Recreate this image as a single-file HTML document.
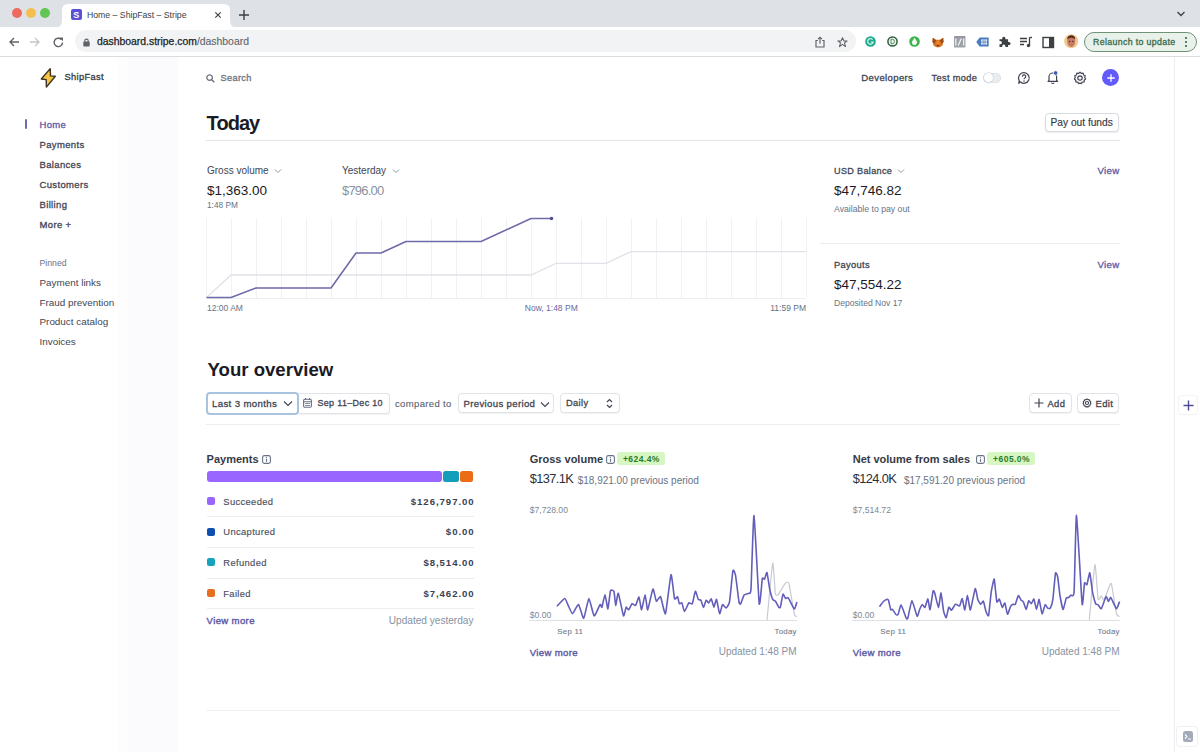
<!DOCTYPE html>
<html><head><meta charset="utf-8"><title>Stripe</title>
<style>
*{box-sizing:border-box;margin:0;padding:0}
html,body{width:1200px;height:752px;overflow:hidden;background:#fff;font-family:"Liberation Sans",sans-serif;color:#353a44}
.a{position:absolute;white-space:nowrap;line-height:1}
.b{position:absolute}
svg.b{overflow:visible}
</style></head><body>
<div class="b" style="left:0px;top:0px;width:1200px;height:27px;background:#dee1e6"></div>
<div class="b" style="left:11.7px;top:7.5px;width:10px;height:10px;background:#ed6a5e;border-radius:50%"></div>
<div class="b" style="left:25.8px;top:7.5px;width:10px;height:10px;background:#f5bf4f;border-radius:50%"></div>
<div class="b" style="left:39.6px;top:7.5px;width:10px;height:10px;background:#62c655;border-radius:50%"></div>
<svg class="b" style="left:54px;top:3px" width="184" height="25" viewBox="0 0 184 25"><path d="M0 25 Q8 25 8 17 L8 7 Q8 1 14 1 L170 1 Q176 1 176 7 L176 17 Q176 25 184 25 Z" fill="#fff"/></svg>
<div class="b" style="left:70.5px;top:9.2px;width:11px;height:11px;background:#5b50d6;border-radius:2px"></div>
<div class="a" style="left:73.2px;top:11.0px;font-size:9px;font-weight:700;color:#fff;">S</div>
<div class="a" style="left:87.0px;top:10.8px;font-size:8.7px;font-weight:400;color:#3c4043;">Home – ShipFast – Stripe</div>
<svg class="b" style="left:213px;top:10px" width="10" height="10"><path d="M2.3 2.3L7.7 7.7M7.7 2.3L2.3 7.7" stroke="#3c4043" stroke-width="1.15"/></svg>
<svg class="b" style="left:238px;top:9px" width="12" height="12"><path d="M6 1V11M1 6H11" stroke="#3c4043" stroke-width="1.4"/></svg>
<svg class="b" style="left:1176px;top:10px" width="10" height="8"><path d="M1.5 2L5 5.5L8.5 2" stroke="#3c4043" stroke-width="1.3" fill="none"/></svg>
<div class="b" style="left:0px;top:27px;width:1200px;height:30px;background:#fff"></div>
<div class="b" style="left:0px;top:56px;width:1200px;height:1px;background:#dadce0"></div>
<svg class="b" style="left:8px;top:36px" width="12" height="12"><path d="M11 6H2M6 2L2 6L6 10" stroke="#5f6368" stroke-width="1.4" fill="none"/></svg>
<svg class="b" style="left:29px;top:36px" width="12" height="12"><path d="M1 6H10M6 2L10 6L6 10" stroke="#c4c7cb" stroke-width="1.4" fill="none"/></svg>
<svg class="b" style="left:52px;top:35.5px" width="13" height="13"><path d="M10.5 6.5A4.2 4.2 0 1 1 9.2 3.4" stroke="#5f6368" stroke-width="1.4" fill="none"/><path d="M7.2 1.5H11V5.3Z" fill="#5f6368"/></svg>
<div class="b" style="left:75px;top:30px;width:781px;height:21.5px;background:#f1f3f4;border-radius:11px"></div>
<svg class="b" style="left:82.5px;top:37.5px" width="7" height="9"><rect x="0.3" y="3.6" width="6.4" height="5" rx=".8" fill="#5f6368"/><path d="M1.8 4V2.8A1.7 1.7 0 0 1 5.2 2.8V4" stroke="#5f6368" stroke-width="1.1" fill="none"/></svg>
<div class="a" style="left:97.0px;top:36.5px;font-size:10.4px;font-weight:400;color:#202124;-webkit-text-stroke:0.25px #202124">dashboard.stripe.com<span style="color:#5f6368;-webkit-text-stroke:0.1px #5f6368">/dashboard</span></div>
<svg class="b" style="left:815px;top:36px" width="10" height="12"><path d="M2.8 4.5H1V11H9V4.5H7.2" stroke="#5f6368" stroke-width="1.15" fill="none"/><path d="M5 7.8V1.3M3 3.2L5 1.2L7 3.2" stroke="#5f6368" stroke-width="1.15" fill="none"/></svg>
<svg class="b" style="left:837px;top:36.5px" width="11" height="11"><path d="M5.5 0.8L6.9 3.9H10.2L7.5 5.9L8.5 9.6L5.5 7.4L2.5 9.6L3.5 5.9L0.8 3.9H4.1Z" stroke="#5f6368" stroke-width="1.05" fill="none" stroke-linejoin="round"/></svg>
<svg class="b" style="left:864.7px;top:35.8px" width="11" height="11"><circle cx="5.5" cy="5.5" r="5.3" fill="#1fa88e"/><path d="M7.6 3.6A2.8 2.8 0 1 0 8.2 6.2H5.8" stroke="#c8f5e6" stroke-width="1.3" fill="none"/></svg>
<svg class="b" style="left:887.2px;top:35.8px" width="11" height="11"><circle cx="5.5" cy="5.5" r="4.6" fill="#eef6ef" stroke="#2f5d3a" stroke-width="1.5"/><path d="M4 3.3V7.7H5.3A2.2 2.2 0 0 0 5.3 3.3Z" fill="none" stroke="#4e7a58" stroke-width=".9"/></svg>
<svg class="b" style="left:909.2px;top:35.8px" width="11" height="11"><circle cx="5.5" cy="5.5" r="5.3" fill="#3bb54a"/><path d="M5.5 1.8L7.8 5.2A2.6 2.6 0 1 1 3.2 5.2Z" fill="#f3fbf2"/></svg>
<svg class="b" style="left:931.5px;top:36.5px" width="12" height="11"><path d="M0.8 0.8L4.2 2.8H7.8L11.2 0.8L11.5 5L10.3 8.8L7.5 10.3H4.5L1.7 8.8L0.5 5Z" fill="#d9731f"/><path d="M0.8 0.8L4 3.5L2.8 6.5L0.5 5Z M11.2 0.8L8 3.5L9.2 6.5L11.5 5Z" fill="#9a4a1a"/><path d="M4.5 8.3L6 9.8L7.5 8.3Z" fill="#4a2a15"/><circle cx="6" cy="5.5" r="1.6" fill="#f08a3a"/></svg>
<svg class="b" style="left:953.8px;top:36.2px" width="11.5" height="11.5"><rect x="0" y="0" width="11.5" height="11.5" rx="0.8" fill="#9ea2a9"/><path d="M1.8 2.5V9.5M4.2 9.5L7.3 2.5M9.7 2.5V9.5" stroke="#f4f4f5" stroke-width="1.2"/><path d="M0.5 1H11" stroke="#8a8e95" stroke-width="1"/></svg>
<svg class="b" style="left:975.5px;top:37px" width="13" height="10"><path d="M0.3 5L3.6 0.6H12.6V9.4H3.6Z" fill="#4a7cc0"/><rect x="5.2" y="2.4" width="5.8" height="5.2" fill="#e9f0fa"/><path d="M7.1 2.4V7.6M9 2.4V7.6M5.2 5H11" stroke="#4a7cc0" stroke-width=".7"/></svg>
<svg class="b" style="left:998px;top:35px" width="13" height="13" viewBox="0 0 13 13"><path d="M1.5 4.2H4.2V3.3A1.6 1.6 0 1 1 7.4 3.3V4.2H10.1V6.9H11A1.6 1.6 0 1 1 11 10.1H10.1V12H7.4V11.2A1.6 1.6 0 1 0 4.2 11.2V12H1.5V9.3H2.3A1.6 1.6 0 1 0 2.3 6.1H1.5Z" fill="#3c4043"/></svg>
<svg class="b" style="left:1019px;top:36px" width="14" height="12"><path d="M1 2.5H8M1 5.5H8M1 8.5H5" stroke="#3c4043" stroke-width="1.3"/><path d="M10.5 1.5V9" stroke="#3c4043" stroke-width="1.3"/><circle cx="9.5" cy="9.5" r="1.7" fill="#3c4043"/><path d="M10.5 1.5H13" stroke="#3c4043" stroke-width="1.3"/></svg>
<svg class="b" style="left:1042px;top:35.5px" width="13" height="13"><rect x="1" y="1.5" width="10.5" height="10" fill="none" stroke="#3c4043" stroke-width="1.4"/><rect x="7" y="1.5" width="4.5" height="10" fill="#3c4043"/></svg>
<svg class="b" style="left:1064px;top:34px" width="15" height="15"><circle cx="7.2" cy="7.2" r="7" fill="#f1c88f"/><ellipse cx="7.2" cy="7.6" rx="4" ry="5.3" fill="#c27a62"/><path d="M3 5.5Q3.5 1.3 7.2 1.3Q11 1.3 11.4 5.5Q9.5 3.6 7.2 3.8Q4.8 3.6 3 5.5Z" fill="#5a2c18"/><circle cx="5.6" cy="7.4" r=".7" fill="#4a2a20"/><circle cx="8.8" cy="7.4" r=".7" fill="#4a2a20"/></svg>
<div class="b" style="left:1083.5px;top:31.5px;width:113px;height:20px;background:#e8f2ea;border:1.2px solid #6f9279;border-radius:10px"></div>
<div class="a" style="left:1093.0px;top:37.5px;font-size:8.79px;font-weight:400;color:#3b6a4b;-webkit-text-stroke:0.3px #3b6a4b;letter-spacing:0.35px;">Relaunch to update</div>
<div class="b" style="left:1185.2px;top:37.3px;width:2.2px;height:2.2px;background:#2d5e3e;border-radius:50%"></div>
<div class="b" style="left:1185.2px;top:41px;width:2.2px;height:2.2px;background:#2d5e3e;border-radius:50%"></div>
<div class="b" style="left:1185.2px;top:44.7px;width:2.2px;height:2.2px;background:#2d5e3e;border-radius:50%"></div>
<div class="b" style="left:117px;top:57px;width:11px;height:695px;background:#fdfdfe"></div>
<div class="b" style="left:128px;top:57px;width:50px;height:695px;background:#fbfbfd"></div>
<div class="b" style="left:1174px;top:57px;width:1px;height:695px;background:#ebeef1"></div>
<svg class="b" style="left:38px;top:66px" width="20" height="24"><path d="M12.2 2.6L3.3 13L8.2 13.6L8.4 21.1L17.3 10.3L12.5 9.9Z" fill="#f5c443" stroke="#3b3122" stroke-width="1.4" stroke-linejoin="round"/></svg>
<div class="a" style="left:64.5px;top:73.3px;font-size:9.3px;font-weight:400;color:#353a44;-webkit-text-stroke:0.3px #353a44;letter-spacing:0.35px;">ShipFast</div>
<div class="b" style="left:25px;top:119px;width:2px;height:10px;background:#6d6aa8;border-radius:1px"></div>
<div class="a" style="left:39.5px;top:119.5px;font-size:9.49px;font-weight:400;color:#5b58a6;-webkit-text-stroke:0.3px #5b58a6;letter-spacing:0.35px;">Home</div>
<div class="a" style="left:39.5px;top:139.5px;font-size:9.49px;font-weight:400;color:#414552;-webkit-text-stroke:0.3px #414552;letter-spacing:0.35px;">Payments</div>
<div class="a" style="left:39.5px;top:159.5px;font-size:9.49px;font-weight:400;color:#414552;-webkit-text-stroke:0.3px #414552;letter-spacing:0.35px;">Balances</div>
<div class="a" style="left:39.5px;top:179.5px;font-size:9.49px;font-weight:400;color:#414552;-webkit-text-stroke:0.3px #414552;letter-spacing:0.35px;">Customers</div>
<div class="a" style="left:39.5px;top:199.5px;font-size:9.49px;font-weight:400;color:#414552;-webkit-text-stroke:0.3px #414552;letter-spacing:0.35px;">Billing</div>
<div class="a" style="left:39.5px;top:219.5px;font-size:9.49px;font-weight:400;color:#414552;-webkit-text-stroke:0.3px #414552;letter-spacing:0.35px;">More +</div>
<div class="a" style="left:39.5px;top:258.6px;font-size:8.7px;font-weight:400;color:#687385;">Pinned</div>
<div class="a" style="left:39.5px;top:277.6px;font-size:9.9px;font-weight:400;color:#414552;">Payment links</div>
<div class="a" style="left:39.5px;top:297.5px;font-size:9.9px;font-weight:400;color:#414552;">Fraud prevention</div>
<div class="a" style="left:39.5px;top:317.4px;font-size:9.9px;font-weight:400;color:#414552;">Product catalog</div>
<div class="a" style="left:39.5px;top:337.3px;font-size:9.9px;font-weight:400;color:#414552;">Invoices</div>
<svg class="b" style="left:206px;top:73.5px" width="9" height="9"><circle cx="3.6" cy="3.6" r="2.8" stroke="#6c7280" stroke-width="1.3" fill="none"/><path d="M5.7 5.7L8.3 8.3" stroke="#6c7280" stroke-width="1.4"/></svg>
<div class="a" style="left:220.5px;top:73.5px;font-size:9.21px;font-weight:400;color:#6c7280;-webkit-text-stroke:0.3px #6c7280;letter-spacing:0.35px;">Search</div>
<div class="a" style="left:861.3px;top:73.4px;font-size:9.58px;font-weight:400;color:#414552;-webkit-text-stroke:0.3px #414552;letter-spacing:0.35px;">Developers</div>
<div class="a" style="left:931.6px;top:73.7px;font-size:9.21px;font-weight:400;color:#414552;-webkit-text-stroke:0.3px #414552;letter-spacing:0.35px;">Test mode</div>
<div class="b" style="left:983.3px;top:72.7px;width:17.5px;height:10px;background:#ebeef1;border-radius:5px;box-shadow:inset 0 0 0 1px #dfe3e8"></div>
<div class="b" style="left:984px;top:73.4px;width:8.6px;height:8.6px;background:#fff;border-radius:50%;box-shadow:0 0 0 .6px #c9ced6"></div>
<svg class="b" style="left:1017px;top:71px" width="14" height="14"><path d="M7 1.7A5.3 5.3 0 1 1 3.2 10.8L1.8 12.3L2.2 9.6A5.3 5.3 0 0 1 7 1.7Z" fill="none" stroke="#414552" stroke-width="1.25" stroke-linejoin="round"/><path d="M5.4 5.7A1.7 1.7 0 1 1 7.5 7.2C7.1 7.5 7 7.8 7 8.3" stroke="#414552" stroke-width="1.15" fill="none"/><circle cx="7" cy="9.9" r=".75" fill="#414552"/></svg>
<svg class="b" style="left:1046px;top:70px" width="14" height="14"><path d="M3 10.3V6.8A3.8 3.8 0 0 1 10.6 6.8V10.3L11.6 11.3H2Z" fill="none" stroke="#414552" stroke-width="1.2" stroke-linejoin="round"/><path d="M5.5 12.6A1.4 1.4 0 0 0 8.1 12.6" stroke="#414552" stroke-width="1.1" fill="none"/><circle cx="9.6" cy="3" r="2.2" fill="#2f5bb8" stroke="#fff" stroke-width="0.7"/></svg>
<svg class="b" style="left:1073px;top:70.5px" width="14" height="14" viewBox="0 0 14 14"><path d="M7 1.2L8.3 2.4L10.1 2.2L10.6 3.9L12.2 4.8L11.7 6.5L12.6 8L11.2 9.2L11.1 11L9.3 11.2L8.2 12.7L7 12L5.8 12.7L4.7 11.2L2.9 11L2.8 9.2L1.4 8L2.3 6.5L1.8 4.8L3.4 3.9L3.9 2.2L5.7 2.4Z" fill="none" stroke="#414552" stroke-width="1.2" stroke-linejoin="round"/><circle cx="7" cy="7" r="2.2" fill="none" stroke="#414552" stroke-width="1.2"/></svg>
<div class="b" style="left:1102.3px;top:69px;width:17px;height:17px;background:#625afa;border-radius:50%"></div>
<svg class="b" style="left:1105.8px;top:72.5px" width="10" height="10"><path d="M5 1.3V8.7M1.3 5H8.7" stroke="#fff" stroke-width="1.3"/></svg>
<div class="a" style="left:206.6px;top:112.6px;font-size:20px;font-weight:700;color:#1a1b25;letter-spacing:-0.95px">Today</div>
<div class="b" style="left:1044.7px;top:112.5px;width:74.5px;height:19.5px;border:1px solid #d8dbe1;border-radius:4px;background:#fff;box-shadow:0 1px 1.5px rgba(0,0,0,.08)"></div>
<div class="a" style="left:1050.5px;top:117.6px;font-size:10.2px;font-weight:400;color:#353a44;-webkit-text-stroke:0.15px #353a44">Pay out funds</div>
<div class="b" style="left:206px;top:140px;width:914px;height:1px;background:#e3e6ea"></div>
<div class="a" style="left:207.0px;top:165.5px;font-size:10px;font-weight:400;color:#414552;">Gross volume</div>
<svg class="b" style="left:274px;top:168px" width="8" height="6"><path d="M1 1.5L4 4.5L7 1.5" stroke="#8c95a3" stroke-width="1" fill="none"/></svg>
<div class="a" style="left:207.0px;top:183.8px;font-size:13.5px;font-weight:400;color:#1a1b25;">$1,363.00</div>
<div class="a" style="left:207.0px;top:201.4px;font-size:8.3px;font-weight:400;color:#687385;">1:48 PM</div>
<div class="a" style="left:342.0px;top:165.7px;font-size:10px;font-weight:400;color:#414552;">Yesterday</div>
<svg class="b" style="left:391.5px;top:168px" width="8" height="6"><path d="M1 1.5L4 4.5L7 1.5" stroke="#8c95a3" stroke-width="1" fill="none"/></svg>
<div class="a" style="left:342.0px;top:184.2px;font-size:13px;font-weight:400;color:#8792a2;letter-spacing:-0.8px">$796.00</div>
<svg class="b" style="left:0;top:0" width="1200" height="752"><path d="M206.5 218V298" stroke="#f1f2f5" stroke-width="1"/><path d="M231.5 218V298" stroke="#f1f2f5" stroke-width="1"/><path d="M256.5 218V298" stroke="#f1f2f5" stroke-width="1"/><path d="M281.5 218V298" stroke="#f1f2f5" stroke-width="1"/><path d="M306.5 218V298" stroke="#f1f2f5" stroke-width="1"/><path d="M331.5 218V298" stroke="#f1f2f5" stroke-width="1"/><path d="M356.5 218V298" stroke="#f1f2f5" stroke-width="1"/><path d="M381.5 218V298" stroke="#f1f2f5" stroke-width="1"/><path d="M406.5 218V298" stroke="#f1f2f5" stroke-width="1"/><path d="M431.5 218V298" stroke="#f1f2f5" stroke-width="1"/><path d="M456.5 218V298" stroke="#f1f2f5" stroke-width="1"/><path d="M481.5 218V298" stroke="#f1f2f5" stroke-width="1"/><path d="M506.5 218V298" stroke="#f1f2f5" stroke-width="1"/><path d="M531.5 218V298" stroke="#f1f2f5" stroke-width="1"/><path d="M556.5 218V298" stroke="#f1f2f5" stroke-width="1"/><path d="M581.5 218V298" stroke="#f1f2f5" stroke-width="1"/><path d="M606.5 218V298" stroke="#f1f2f5" stroke-width="1"/><path d="M631.5 218V298" stroke="#f1f2f5" stroke-width="1"/><path d="M656.5 218V298" stroke="#f1f2f5" stroke-width="1"/><path d="M681.5 218V298" stroke="#f1f2f5" stroke-width="1"/><path d="M706.5 218V298" stroke="#f1f2f5" stroke-width="1"/><path d="M731.5 218V298" stroke="#f1f2f5" stroke-width="1"/><path d="M756.5 218V298" stroke="#f1f2f5" stroke-width="1"/><path d="M781.5 218V298" stroke="#f1f2f5" stroke-width="1"/><path d="M806.5 218V298" stroke="#f1f2f5" stroke-width="1"/><path d="M206 298.5H806" stroke="#eceef1" stroke-width="1"/><polyline points="206.5,297.5 231,275 531,275 556,263.3 606,263.3 631,251.6 806,251.6" fill="none" stroke="#dfe2e7" stroke-width="1.3"/><polyline points="206.5,297.5 231,297.5 256,288 331,288 356,253 381,253 406,241.5 481,241.5 531,218.5 551.5,218.5" fill="none" stroke="#6f6ba9" stroke-width="1.6" stroke-linejoin="round"/><circle cx="551.5" cy="218.5" r="1.8" fill="#55528f"/></svg>
<div class="a" style="left:207.0px;top:303.6px;font-size:8.5px;font-weight:400;color:#687385;">12:00 AM</div>
<div class="a" style="left:524.8px;top:303.6px;font-size:8.5px;font-weight:400;color:#6a68a0;">Now, 1:48 PM</div>
<div class="a" style="right:394.0px;top:303.6px;font-size:8.5px;font-weight:400;color:#687385;">11:59 PM</div>
<div class="a" style="left:834.0px;top:167.1px;font-size:9.07px;font-weight:400;color:#414552;-webkit-text-stroke:0.3px #414552;letter-spacing:0.35px;">USD Balance</div>
<svg class="b" style="left:897px;top:168px" width="8" height="6"><path d="M1 1.5L4 4.5L7 1.5" stroke="#8c95a3" stroke-width="1" fill="none"/></svg>
<div class="a" style="left:834.0px;top:183.5px;font-size:13.5px;font-weight:400;color:#1a1b25;">$47,746.82</div>
<div class="a" style="left:834.0px;top:205.0px;font-size:8.7px;font-weight:400;color:#687385;">Available to pay out</div>
<div class="a" style="right:80.4px;top:165.8px;font-size:9.67px;font-weight:400;color:#5e5aa6;-webkit-text-stroke:0.3px #5e5aa6;letter-spacing:0.35px;">View</div>
<div class="b" style="left:819.5px;top:243px;width:300px;height:1px;background:#ebeef1"></div>
<div class="a" style="left:834.0px;top:260.9px;font-size:9.3px;font-weight:400;color:#414552;-webkit-text-stroke:0.3px #414552;letter-spacing:0.35px;">Payouts</div>
<div class="a" style="left:834.0px;top:277.8px;font-size:13.5px;font-weight:400;color:#1a1b25;">$47,554.22</div>
<div class="a" style="left:834.0px;top:299.3px;font-size:8.6px;font-weight:400;color:#687385;">Deposited Nov 17</div>
<div class="a" style="right:80.4px;top:259.8px;font-size:9.67px;font-weight:400;color:#5e5aa6;-webkit-text-stroke:0.3px #5e5aa6;letter-spacing:0.35px;">View</div>
<div class="a" style="left:207.5px;top:360.9px;font-size:18.6px;font-weight:700;color:#1a1b25;">Your overview</div>
<div class="b" style="left:205.5px;top:391.5px;width:93px;height:23px;border:2px solid #a8c3df;border-radius:4px;background:#fff"></div>
<div class="a" style="left:212.0px;top:399.0px;font-size:9.67px;font-weight:400;color:#414552;-webkit-text-stroke:0.3px #414552;letter-spacing:0.35px;">Last 3 months</div>
<svg class="b" style="left:282.5px;top:400px" width="10" height="7"><path d="M1 1.5L5 5.5L9 1.5" stroke="#414552" stroke-width="1.1" fill="none"/></svg>
<div class="b" style="left:298.5px;top:392.5px;width:91.2px;height:21px;border:1px solid #e0e3e8;border-left:none;border-radius:0 4px 4px 0;background:#fff;box-shadow:0 1px 1px rgba(0,0,0,.06)"></div>
<svg class="b" style="left:302.5px;top:398px" width="9" height="10"><rect x="0.6" y="1.2" width="7.8" height="8" rx="1.2" fill="none" stroke="#687385" stroke-width="1.1"/><path d="M0.6 3.8H8.4M2.5 0V2M6.5 0V2" stroke="#687385" stroke-width="1.1"/><path d="M2 5.5H7M2 7.5H7" stroke="#687385" stroke-width=".8"/></svg>
<div class="a" style="left:317.5px;top:399.3px;font-size:8.93px;font-weight:400;color:#414552;-webkit-text-stroke:0.3px #414552;letter-spacing:0.35px;">Sep 11–Dec 10</div>
<div class="a" style="left:395.0px;top:399.3px;font-size:9.53px;font-weight:400;color:#596171;-webkit-text-stroke:0.3px #596171;letter-spacing:0.35px;-webkit-text-stroke:0.1px #596171">compared to</div>
<div class="b" style="left:457.5px;top:393.3px;width:96.2px;height:19.5px;border:1px solid #e0e3e8;border-radius:4px;background:#fff;box-shadow:0 1px 1px rgba(0,0,0,.06)"></div>
<div class="a" style="left:463.5px;top:398.8px;font-size:9.58px;font-weight:400;color:#414552;-webkit-text-stroke:0.3px #414552;letter-spacing:0.35px;">Previous period</div>
<svg class="b" style="left:540px;top:400.5px" width="10" height="7"><path d="M1 1.5L5 5.5L9 1.5" stroke="#414552" stroke-width="1.1" fill="none"/></svg>
<div class="b" style="left:560px;top:393.3px;width:60.4px;height:19.5px;border:1px solid #e0e3e8;border-radius:4px;background:#fff;box-shadow:0 1px 1px rgba(0,0,0,.06)"></div>
<div class="a" style="left:566.0px;top:399.0px;font-size:9.3px;font-weight:400;color:#414552;-webkit-text-stroke:0.3px #414552;letter-spacing:0.35px;">Daily</div>
<svg class="b" style="left:605.5px;top:398px" width="7" height="11"><path d="M1 4L3.5 1.5L6 4M1 7L3.5 9.5L6 7" stroke="#414552" stroke-width="1.2" fill="none"/></svg>
<div class="b" style="left:1028.8px;top:393px;width:43.2px;height:20px;border:1px solid #e0e3e8;border-radius:4px;background:#fff;box-shadow:0 1px 1px rgba(0,0,0,.06)"></div>
<svg class="b" style="left:1034px;top:398px" width="10" height="10"><path d="M5 0.5V9.5M0.5 5H9.5" stroke="#414552" stroke-width="1.2"/></svg>
<div class="a" style="left:1047.5px;top:398.9px;font-size:9.39px;font-weight:400;color:#414552;-webkit-text-stroke:0.3px #414552;letter-spacing:0.35px;">Add</div>
<div class="b" style="left:1076.8px;top:393px;width:42.7px;height:20px;border:1px solid #e0e3e8;border-radius:4px;background:#fff;box-shadow:0 1px 1px rgba(0,0,0,.06)"></div>
<svg class="b" style="left:1082px;top:398px" width="10" height="10" viewBox="0 0 14 14"><path d="M7 1.2L8.3 2.4L10.1 2.2L10.6 3.9L12.2 4.8L11.7 6.5L12.6 8L11.2 9.2L11.1 11L9.3 11.2L8.2 12.7L7 12L5.8 12.7L4.7 11.2L2.9 11L2.8 9.2L1.4 8L2.3 6.5L1.8 4.8L3.4 3.9L3.9 2.2L5.7 2.4Z" fill="none" stroke="#414552" stroke-width="1.5" stroke-linejoin="round"/><circle cx="7" cy="7" r="2.2" fill="none" stroke="#414552" stroke-width="1.5"/></svg>
<div class="a" style="left:1095.5px;top:398.8px;font-size:9.49px;font-weight:400;color:#414552;-webkit-text-stroke:0.3px #414552;letter-spacing:0.35px;">Edit</div>
<div class="b" style="left:206px;top:424px;width:914px;height:1px;background:#ebeef1"></div>
<div class="b" style="left:1179px;top:396px;width:18px;height:18px;background:#fff;border-radius:3px;box-shadow:0 0 0 1px #f3f4f6,0 1px 2px rgba(0,0,0,.04)"></div>
<svg class="b" style="left:1182.5px;top:399.5px" width="11" height="11"><path d="M5.5 0.5V10.5M0.5 5.5H10.5" stroke="#4f4c92" stroke-width="1.4"/></svg>
<div class="a" style="left:206.6px;top:453.8px;font-size:11px;font-weight:700;color:#353a44;">Payments</div>
<svg class="b" style="left:262px;top:455px" width="9" height="9"><rect x="0.6" y="0.6" width="7.8" height="7.8" rx="1.8" fill="none" stroke="#687385" stroke-width="1.1"/><path d="M4.5 3.8V6.8" stroke="#687385" stroke-width="1.1"/><circle cx="4.5" cy="2.3" r=".6" fill="#687385"/></svg>
<div class="b" style="left:206.5px;top:470.8px;width:235.2px;height:10.9px;background:#9966ff;border-radius:3px"></div>
<div class="b" style="left:442.9px;top:470.8px;width:15.9px;height:10.9px;background:#139fbb;border-radius:2.5px"></div>
<div class="b" style="left:459.8px;top:470.8px;width:13.5px;height:10.9px;background:#ec6c15;border-radius:2.5px"></div>
<div class="b" style="left:206.5px;top:496.9px;width:8px;height:8px;background:#9966ff;border-radius:2px"></div>
<div class="a" style="left:223.3px;top:496.5px;font-size:9.39px;font-weight:400;color:#4a5060;-webkit-text-stroke:0.3px #4a5060;letter-spacing:0.35px;-webkit-text-stroke:0.15px #4a5060">Succeeded</div>
<div class="a" style="right:725.4px;top:496.5px;font-size:9.6px;font-weight:700;color:#3c4250;letter-spacing:0.95px">$126,797.00</div>
<div class="b" style="left:206.5px;top:516.1999999999999px;width:267px;height:1px;background:#ebeef1"></div>
<div class="b" style="left:206.5px;top:527.55px;width:8px;height:8px;background:#0d4fae;border-radius:2px"></div>
<div class="a" style="left:223.3px;top:527.2px;font-size:9.39px;font-weight:400;color:#4a5060;-webkit-text-stroke:0.3px #4a5060;letter-spacing:0.35px;-webkit-text-stroke:0.15px #4a5060">Uncaptured</div>
<div class="a" style="right:725.4px;top:527.2px;font-size:9.6px;font-weight:700;color:#3c4250;letter-spacing:0.95px">$0.00</div>
<div class="b" style="left:206.5px;top:546.8499999999999px;width:267px;height:1px;background:#ebeef1"></div>
<div class="b" style="left:206.5px;top:558.1999999999999px;width:8px;height:8px;background:#17a2bd;border-radius:2px"></div>
<div class="a" style="left:223.3px;top:557.8px;font-size:9.39px;font-weight:400;color:#4a5060;-webkit-text-stroke:0.3px #4a5060;letter-spacing:0.35px;-webkit-text-stroke:0.15px #4a5060">Refunded</div>
<div class="a" style="right:725.4px;top:557.8px;font-size:9.6px;font-weight:700;color:#3c4250;letter-spacing:0.95px">$8,514.00</div>
<div class="b" style="left:206.5px;top:577.4999999999999px;width:267px;height:1px;background:#ebeef1"></div>
<div class="b" style="left:206.5px;top:588.8499999999999px;width:8px;height:8px;background:#e56f1f;border-radius:2px"></div>
<div class="a" style="left:223.3px;top:588.5px;font-size:9.39px;font-weight:400;color:#4a5060;-webkit-text-stroke:0.3px #4a5060;letter-spacing:0.35px;-webkit-text-stroke:0.15px #4a5060">Failed</div>
<div class="a" style="right:725.4px;top:588.5px;font-size:9.6px;font-weight:700;color:#3c4250;letter-spacing:0.95px">$7,462.00</div>
<div class="b" style="left:206.5px;top:608.1499999999999px;width:267px;height:1px;background:#ebeef1"></div>
<div class="a" style="left:206.6px;top:616.1px;font-size:9.58px;font-weight:400;color:#5e5aa6;-webkit-text-stroke:0.3px #5e5aa6;letter-spacing:0.35px;-webkit-text-stroke:0.4px #5e5aa6">View more</div>
<div class="a" style="right:726.5px;top:615.6px;font-size:10.1px;font-weight:400;color:#8792a2;">Updated yesterday</div>
<svg class="b" style="left:0;top:0" width="1200" height="752"><path d="M529 620.5H797" stroke="#dcdfe4" stroke-width="1"/><path d="M767.0 620.1 C767.5 615.5 772.0 565.2 772.7 563.1 C773.4 561.0 774.9 590.7 775.3 593.3 C775.7 595.9 777.4 595.3 777.9 595.0 C778.4 594.7 780.4 591.0 781.0 590.0 C781.6 589.0 785.0 583.5 785.6 583.0 C786.2 582.5 788.3 581.3 789.0 583.8 C789.7 586.3 793.7 611.4 794.3 614.0 C794.9 616.6 796.7 616.5 796.9 616.7" fill="none" stroke="#c6cad1" stroke-width="1.2" stroke-linejoin="round"/><path d="M556.9 606.3 C557.5 605.7 563.8 598.6 564.7 598.5 C565.6 598.4 567.6 604.2 568.2 605.4 C568.8 606.6 571.7 613.8 572.5 613.7 C573.3 613.6 577.6 604.2 578.5 604.6 C579.4 605.0 582.9 618.9 583.7 618.4 C584.5 617.9 588.1 598.7 588.9 598.5 C589.7 598.3 593.2 615.3 594.1 615.8 C595.0 616.3 599.5 605.3 600.1 604.6 C600.7 603.9 601.5 608.0 601.9 607.2 C602.3 606.4 604.5 594.6 605.0 594.7 C605.5 594.8 607.5 609.2 607.9 608.9 C608.3 608.6 610.0 592.2 610.5 590.8 C611.0 589.4 613.6 590.4 614.0 591.6 C614.4 592.8 615.4 605.3 615.7 605.4 C616.0 605.5 617.7 592.5 618.3 593.3 C618.9 594.1 622.9 614.7 623.5 615.8 C624.1 616.9 625.7 607.7 626.1 607.2 C626.5 606.7 628.2 610.1 628.7 609.8 C629.2 609.5 631.5 604.1 632.1 603.7 C632.7 603.3 635.0 605.9 635.6 605.4 C636.2 604.9 638.5 596.7 639.0 597.1 C639.5 597.5 641.1 610.0 641.6 609.8 C642.1 609.6 644.6 594.7 645.1 594.7 C645.6 594.7 647.1 610.3 647.7 609.8 C648.3 609.3 652.2 589.7 652.9 589.0 C653.6 588.3 655.7 600.5 656.3 601.1 C656.9 601.7 659.9 595.8 660.6 596.8 C661.3 597.8 664.7 615.5 665.5 613.7 C666.3 611.9 670.3 575.9 671.0 574.7 C671.7 573.5 674.0 596.7 674.5 598.5 C675.0 600.3 677.2 596.4 677.6 596.8 C678.0 597.2 679.0 603.2 679.3 603.7 C679.6 604.2 681.5 602.3 681.9 602.9 C682.3 603.5 683.9 611.5 684.5 611.5 C685.1 611.5 688.2 603.5 688.8 602.9 C689.4 602.3 691.8 604.6 692.3 603.7 C692.8 602.8 694.9 591.6 695.4 591.3 C695.9 591.0 697.9 598.7 698.3 599.4 C698.7 600.1 700.5 599.7 700.9 600.3 C701.3 600.9 703.1 607.5 703.5 607.5 C703.9 607.5 705.7 600.7 706.1 600.3 C706.5 599.9 708.3 603.0 708.7 602.9 C709.1 602.8 710.9 598.6 711.3 598.9 C711.7 599.2 713.5 607.2 713.9 607.2 C714.3 607.2 716.0 598.9 716.5 599.4 C717.0 599.9 719.1 613.3 719.6 613.7 C720.1 614.1 722.0 605.1 722.5 604.6 C723.0 604.1 725.4 608.2 726.0 608.0 C726.6 607.8 728.9 605.0 729.5 602.0 C730.1 599.0 732.4 573.0 732.9 570.9 C733.4 568.8 735.0 572.7 735.5 575.2 C736.0 577.7 738.6 599.7 739.0 602.0 C739.4 604.3 740.3 604.3 740.7 603.7 C741.1 603.1 743.5 595.8 744.1 595.0 C744.7 594.2 747.9 593.8 748.5 593.3 C749.1 592.8 750.6 595.2 751.0 589.0 C751.4 582.8 753.3 514.4 754.0 515.6 C754.7 516.8 758.5 598.7 759.2 603.7 C759.9 608.7 761.9 580.7 762.3 578.7 C762.7 576.7 764.1 579.7 764.5 579.2 C764.9 578.7 766.6 571.7 767.0 572.6 C767.4 573.5 769.5 588.7 770.0 590.8 C770.5 592.9 772.3 598.6 772.7 599.4 C773.1 600.2 774.8 600.5 775.3 601.1 C775.8 601.7 778.3 606.7 778.7 607.2 C779.1 607.7 780.1 608.2 780.4 607.2 C780.7 606.2 782.6 594.9 783.0 594.2 C783.4 593.5 785.2 598.2 785.6 598.5 C786.0 598.8 787.5 596.9 788.2 597.7 C788.9 598.5 793.6 608.6 794.3 608.9 C795.0 609.2 796.7 602.6 796.9 602.0" fill="none" stroke="#625eba" stroke-width="1.6" stroke-linejoin="round"/><path d="M852 620.5H1120" stroke="#dcdfe4" stroke-width="1"/><path d="M1089.3 619.8 C1089.7 615.4 1094.2 566.5 1094.9 564.8 C1095.6 563.1 1097.6 596.6 1098.1 599.1 C1098.6 601.6 1100.8 595.8 1101.3 595.9 C1101.8 596.0 1103.3 600.9 1104.0 600.0 C1104.7 599.1 1109.4 585.9 1110.0 584.7 C1110.6 583.5 1111.1 582.4 1111.6 584.7 C1112.1 587.0 1115.8 610.9 1116.4 613.5 C1117.0 616.1 1119.3 616.4 1119.6 616.6" fill="none" stroke="#c6cad1" stroke-width="1.2" stroke-linejoin="round"/><path d="M879.5 606.7 C879.8 606.3 882.8 602.1 883.4 601.5 C884.0 600.9 886.9 599.4 887.3 599.3 C887.7 599.2 888.3 599.8 888.6 600.6 C888.9 601.4 890.4 609.0 890.7 609.7 C891.0 610.4 892.0 608.9 892.4 609.3 C892.8 609.7 895.4 614.1 895.9 614.5 C896.4 614.9 897.7 615.3 898.1 614.5 C898.5 613.7 900.4 604.7 901.1 605.0 C901.8 605.3 905.7 617.3 906.3 618.3 C906.9 619.3 907.6 618.9 908.0 617.5 C908.4 616.1 911.2 600.7 911.9 600.6 C912.6 600.5 916.5 615.5 917.1 616.2 C917.7 616.9 919.3 610.2 919.7 609.3 C920.1 608.4 921.9 604.6 922.3 604.5 C922.7 604.4 924.5 607.9 924.9 607.5 C925.3 607.1 927.5 598.7 927.9 598.9 C928.3 599.1 929.6 610.3 930.0 609.7 C930.4 609.1 932.7 592.4 933.1 591.1 C933.5 589.8 934.4 592.0 934.8 593.3 C935.2 594.6 938.0 607.7 938.5 607.7 C939.0 607.7 940.6 592.7 941.0 593.0 C941.4 593.3 943.2 609.2 943.6 611.2 C944.0 613.2 945.8 618.0 946.2 617.7 C946.6 617.4 948.4 607.9 948.8 607.3 C949.2 606.7 950.9 610.5 951.4 610.3 C951.9 610.1 954.9 604.7 955.3 604.3 C955.7 603.9 956.7 604.6 957.0 604.7 C957.3 604.8 959.2 606.5 959.6 606.0 C960.0 605.5 961.8 598.3 962.2 598.6 C962.6 598.9 964.4 610.2 964.8 609.9 C965.2 609.6 967.0 595.2 967.4 595.2 C967.8 595.2 969.8 610.4 970.4 609.9 C971.0 609.4 974.6 589.5 975.2 588.7 C975.8 587.9 977.4 598.3 977.8 599.5 C978.2 600.7 980.4 604.2 980.8 604.3 C981.2 604.4 983.0 600.6 983.4 601.2 C983.8 601.8 985.6 610.5 986.0 611.6 C986.4 612.7 988.2 617.1 988.6 615.5 C989.0 613.9 990.8 595.1 991.2 592.2 C991.6 589.3 993.8 578.4 994.2 579.2 C994.6 580.0 996.4 600.1 996.8 601.7 C997.2 603.3 998.9 598.7 999.3 599.1 C999.7 599.5 1001.9 607.0 1002.3 607.3 C1002.7 607.6 1004.5 602.4 1004.9 603.0 C1005.3 603.6 1007.0 613.9 1007.5 614.2 C1008.0 614.5 1010.1 607.2 1010.6 606.4 C1011.1 605.6 1012.8 604.5 1013.2 604.3 C1013.6 604.1 1014.9 605.0 1015.3 604.3 C1015.7 603.6 1017.9 596.0 1018.3 595.6 C1018.7 595.2 1020.5 599.4 1020.9 599.9 C1021.3 600.4 1023.1 601.3 1023.5 602.1 C1023.9 602.9 1025.7 609.6 1026.1 609.5 C1026.5 609.4 1028.3 601.3 1028.7 600.8 C1029.1 600.3 1030.9 603.9 1031.3 603.8 C1031.7 603.7 1033.5 598.6 1033.9 599.1 C1034.3 599.6 1036.1 609.5 1036.5 609.5 C1036.9 609.5 1038.7 599.2 1039.1 599.5 C1039.5 599.8 1041.6 613.4 1042.1 613.8 C1042.6 614.2 1044.7 605.1 1045.1 604.7 C1045.5 604.3 1047.3 607.9 1047.7 608.2 C1048.1 608.5 1049.9 608.9 1050.3 608.2 C1050.7 607.5 1052.5 601.9 1052.9 599.1 C1053.3 596.3 1055.1 575.0 1055.5 573.2 C1055.9 571.4 1057.4 575.3 1057.7 577.0 C1058.0 578.7 1059.4 591.7 1059.8 594.3 C1060.2 596.9 1062.5 609.2 1063.0 609.5 C1063.5 609.8 1065.8 599.3 1066.2 598.3 C1066.6 597.3 1068.2 597.8 1068.6 597.5 C1069.0 597.2 1070.6 595.5 1071.0 595.1 C1071.4 594.7 1073.7 598.3 1074.1 591.9 C1074.5 585.5 1075.9 514.4 1076.5 515.4 C1077.1 516.4 1081.5 598.5 1082.1 603.9 C1082.7 609.3 1084.1 584.6 1084.5 583.1 C1084.9 581.6 1086.5 585.5 1086.9 584.7 C1087.3 583.9 1089.4 572.2 1089.8 572.8 C1090.2 573.4 1092.0 589.4 1092.5 591.9 C1093.0 594.4 1095.3 602.9 1095.7 603.9 C1096.1 604.9 1097.7 604.3 1098.1 604.7 C1098.5 605.1 1100.7 609.3 1101.3 608.7 C1101.9 608.1 1105.4 597.3 1106.0 596.7 C1106.6 596.1 1108.0 601.4 1108.4 601.5 C1108.8 601.6 1110.2 596.9 1110.8 597.5 C1111.4 598.1 1115.7 608.4 1116.4 608.7 C1117.1 609.0 1119.3 602.1 1119.6 601.5" fill="none" stroke="#625eba" stroke-width="1.6" stroke-linejoin="round"/></svg>
<div class="a" style="left:529.7px;top:453.5px;font-size:11px;font-weight:700;color:#353a44;">Gross volume</div>
<svg class="b" style="left:606.2px;top:455px" width="9" height="9"><rect x="0.6" y="0.6" width="7.8" height="7.8" rx="1.8" fill="none" stroke="#687385" stroke-width="1.1"/><path d="M4.5 3.8V6.8" stroke="#687385" stroke-width="1.1"/><circle cx="4.5" cy="2.3" r=".6" fill="#687385"/></svg>
<div class="b" style="left:617.2px;top:451.7px;width:48px;height:13px;background:#d7f7c2;border-radius:3px"></div>
<div class="a" style="left:641.4px;top:454.8px;font-size:8.5px;font-weight:700;color:#2a7a2a;transform:translateX(-50%);letter-spacing:0.45px">+624.4%</div>
<div class="a" style="left:529.7px;top:473.3px;font-size:12.8px;font-weight:400;color:#2a2f3a;letter-spacing:-0.6px">$137.1K</div>
<div class="a" style="left:577.7px;top:475.9px;font-size:10px;font-weight:400;color:#687385;">$18,921.00 previous period</div>
<div class="a" style="left:529.7px;top:505.9px;font-size:8.6px;font-weight:400;color:#7d8796;">$7,728.00</div>
<div class="a" style="left:529.7px;top:611.3px;font-size:8.6px;font-weight:400;color:#7d8796;">$0.00</div>
<div class="a" style="left:557.3px;top:627.6px;font-size:7.9px;font-weight:400;color:#737d8c;letter-spacing:0.25px;-webkit-text-stroke:0.1px #737d8c">Sep 11</div>
<div class="a" style="right:403.2px;top:627.6px;font-size:7.9px;font-weight:400;color:#737d8c;letter-spacing:0.25px;-webkit-text-stroke:0.1px #737d8c">Today</div>
<div class="a" style="left:529.7px;top:647.5px;font-size:9.58px;font-weight:400;color:#5e5aa6;-webkit-text-stroke:0.3px #5e5aa6;letter-spacing:0.35px;-webkit-text-stroke:0.4px #5e5aa6">View more</div>
<div class="a" style="right:403.5px;top:647.0px;font-size:10px;font-weight:400;color:#8792a2;">Updated 1:48 PM</div>
<div class="a" style="left:852.7px;top:453.5px;font-size:11px;font-weight:700;color:#353a44;">Net volume from sales</div>
<svg class="b" style="left:976.4000000000001px;top:455px" width="9" height="9"><rect x="0.6" y="0.6" width="7.8" height="7.8" rx="1.8" fill="none" stroke="#687385" stroke-width="1.1"/><path d="M4.5 3.8V6.8" stroke="#687385" stroke-width="1.1"/><circle cx="4.5" cy="2.3" r=".6" fill="#687385"/></svg>
<div class="b" style="left:987.4000000000001px;top:451.7px;width:48px;height:13px;background:#d7f7c2;border-radius:3px"></div>
<div class="a" style="left:1011.6px;top:454.8px;font-size:8.5px;font-weight:700;color:#2a7a2a;transform:translateX(-50%);letter-spacing:0.45px">+605.0%</div>
<div class="a" style="left:852.7px;top:473.3px;font-size:12.8px;font-weight:400;color:#2a2f3a;letter-spacing:-0.6px">$124.0K</div>
<div class="a" style="left:903.9px;top:475.9px;font-size:10px;font-weight:400;color:#687385;">$17,591.20 previous period</div>
<div class="a" style="left:852.7px;top:505.9px;font-size:8.6px;font-weight:400;color:#7d8796;">$7,514.72</div>
<div class="a" style="left:852.7px;top:611.3px;font-size:8.6px;font-weight:400;color:#7d8796;">$0.00</div>
<div class="a" style="left:880.3px;top:627.6px;font-size:7.9px;font-weight:400;color:#737d8c;letter-spacing:0.25px;-webkit-text-stroke:0.1px #737d8c">Sep 11</div>
<div class="a" style="right:80.2px;top:627.6px;font-size:7.9px;font-weight:400;color:#737d8c;letter-spacing:0.25px;-webkit-text-stroke:0.1px #737d8c">Today</div>
<div class="a" style="left:852.7px;top:647.5px;font-size:9.58px;font-weight:400;color:#5e5aa6;-webkit-text-stroke:0.3px #5e5aa6;letter-spacing:0.35px;-webkit-text-stroke:0.4px #5e5aa6">View more</div>
<div class="a" style="right:80.5px;top:647.0px;font-size:10px;font-weight:400;color:#8792a2;">Updated 1:48 PM</div>
<div class="b" style="left:206px;top:710px;width:914px;height:1px;background:#f0f2f5"></div>
<div class="b" style="left:1177px;top:727px;width:20px;height:19px;background:#fff;border-radius:3px;box-shadow:0 0 0 1px #f0f1f4"></div>
<div class="b" style="left:1182.5px;top:731px;width:10px;height:11px;background:#a3abb8;border-radius:2.5px"></div>
<svg class="b" style="left:1183.5px;top:733px" width="8" height="8"><path d="M1 1.5L3 3.5L1 5.5M4 6H7" stroke="#fff" stroke-width="1.1" fill="none"/></svg>
</body></html>
